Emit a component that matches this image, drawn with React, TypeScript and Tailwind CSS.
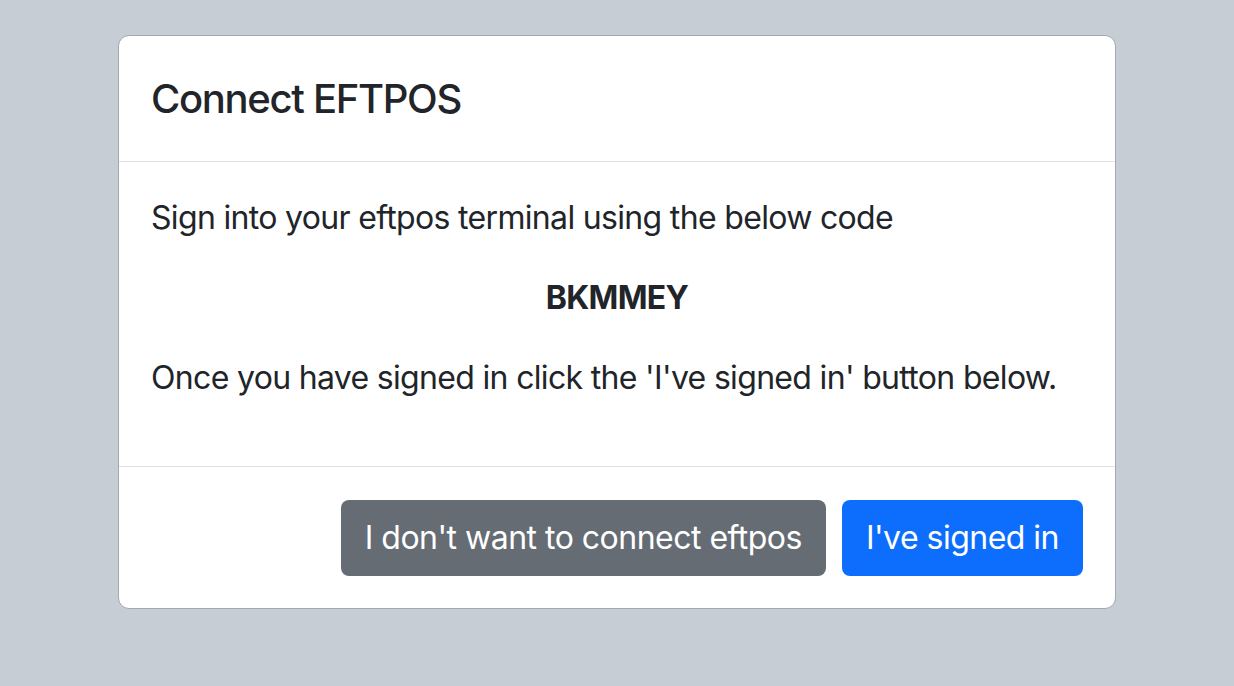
export default function App() {
  return (
    <div
      className="min-h-screen bg-[#c7cdd4] pt-[35px] text-[#212529]"
      style={{ fontFamily: "Inter, 'Noto Sans', sans-serif" }}
    >
      <div className="mx-auto w-[998px] overflow-hidden rounded-[11px] border border-[#a4a9b0] bg-white">
        <div className="flex h-[126px] items-center border-b border-[#dee2e6] px-8">
          <h5 className="text-[40px] font-medium leading-[60px] tracking-[-0.033em]">Connect EFTPOS</h5>
        </div>
        <div className="p-8 text-[32px] leading-[48px] tracking-[-0.021em]">
          <p className="mb-8">Sign into your eftpos terminal using the below code</p>
          <p className="mb-8 text-center font-bold">BKMMEY</p>
          <p className="mb-8">Once you have signed in click the 'I've signed in' button below.</p>
        </div>
        <div className="flex items-center justify-end gap-4 border-t border-[#dee2e6] px-8 pt-[33px] pb-8 text-[32px] leading-[48px] tracking-[-0.016em] text-white">
          <button className="h-[76px] rounded-[8px] bg-[#656c74] px-6">
            I don't want to connect eftpos
          </button>
          <button className="h-[76px] rounded-[8px] bg-[#0d6efd] px-6">I've signed in</button>
        </div>
      </div>
    </div>
  );
}
